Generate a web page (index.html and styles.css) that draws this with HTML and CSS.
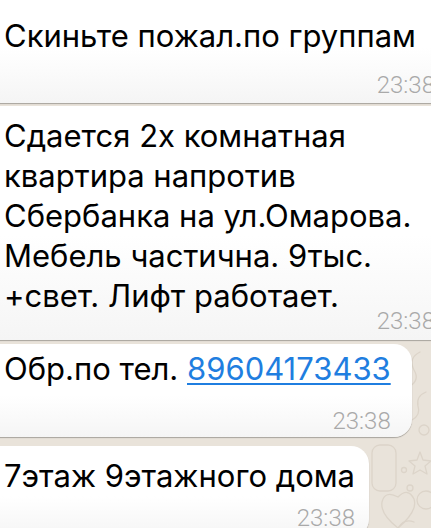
FILE: index.html
```html
<!DOCTYPE html>
<html lang="ru">
<head>
<meta charset="utf-8">
<title>Чат</title>
<link rel="stylesheet" href="styles.css">
</head>
<body>
<svg class="wallpaper" width="431" height="528" viewBox="0 0 431 528" aria-hidden="true">
  <g fill="none" stroke="#dcd4c9" stroke-width="1.3" stroke-linecap="round" stroke-linejoin="round">
    <path d="M420 352 q-12 6 -6 18 q6 10 -4 16"/>
    <path d="M426 392 q-10 4 -8 14 q3 9 -6 14"/>
    <circle cx="424" cy="430" r="5"/>
    <rect x="372" y="445" width="24" height="46" rx="8"/>
    <path d="M420 452 l3 8 l8 1 l-6 5 l2 8 l-7 -4 l-7 4 l2 -8 l-6 -5 l8 -1 z"/>
    <circle cx="404" cy="470" r="2.5"/>
    <circle cx="410" cy="488" r="3"/>
    <circle cx="426" cy="500" r="9"/>
    <path d="M398 528 q-18 -14 -16 -26 q3 -12 16 -5 q10 -10 16 2 q4 12 -16 29"/>
    <path d="M398 528 q6 -10 16 -6"/>
  </g>
</svg>
<main class="chat">
  <section class="bubble bubble--wide bubble--first">
    <p class="text">Скиньте пожал.по группам</p>
    <div class="time time--first">23:38</div>
  </section>
  <section class="bubble bubble--wide bubble--second">
    <p class="text">Сдается 2х комнатная<br>квартира напротив<br>Сбербанка на ул.Омарова.<br>Мебель частична. 9тыс.<br>+свет. Лифт работает.</p>
    <div class="time time--second">23:38</div>
  </section>
  <section class="bubble bubble--third">
    <p class="text">Обр.по тел. <a class="link" href="#">89604173433</a></p>
    <div class="time time--third">23:38</div>
  </section>
  <section class="bubble bubble--fourth">
    <p class="text">7этаж 9этажного дома</p>
    <div class="time time--fourth">23:38</div>
  </section>
</main>
</body>
</html>
```
FILE: styles.css
```css
html, body {
  margin: 0;
  padding: 0;
}

body {
  width: 431px;
  height: 528px;
  overflow: hidden;
  position: relative;
  background: #e9e3da;
  font-family: Inter, "Liberation Sans", Arial, sans-serif;
}

.wallpaper {
  position: absolute;
  left: 0;
  top: 0;
  z-index: 0;
}

.chat {
  position: relative;
  z-index: 1;
  display: flex;
  flex-direction: column;
  align-items: flex-start;
  margin-top: -20px;
}

.bubble {
  box-sizing: border-box;
  margin-left: -20px;
  padding: 10px 18px 5px 24px;
  background: linear-gradient(180deg, #ffffff 55%, #f5f5f5 100%);
  border-radius: 18px;
  box-shadow: 0 1px 1px rgba(0, 0, 0, 0.28);
}

.bubble--wide {
  width: 473px;
}

.bubble--first {
  padding-top: 35.6px;
  padding-bottom: 4.4px;
}

.bubble--second {
  margin-top: 3px;
  padding-top: 10px;
}

.bubble--third {
  margin-top: 4px;
  padding-top: 5px;
  padding-right: 21px;
  padding-bottom: 2px;
}

.bubble--fourth {
  margin-top: 9px;
  padding-right: 14px;
}

.text {
  margin: 0;
  font-size: 31px;
  line-height: 40px;
  color: #000;
  white-space: nowrap;
}

.link {
  color: #1f7ee0;
  text-decoration: underline;
  text-decoration-thickness: 2px;
  text-underline-offset: 3px;
}

.time {
  font-family: Roboto, "Liberation Sans", sans-serif;
  font-weight: 300;
  font-size: 24px;
  line-height: 28px;
  color: #a9a9a9;
  text-align: right;
}

.time--first {
  margin-top: 15px;
}

.time--second {
  margin-top: -9px;
}

.time--third {
  margin-top: 18px;
}

.time--fourth {
  margin-top: 8px;
}
```
